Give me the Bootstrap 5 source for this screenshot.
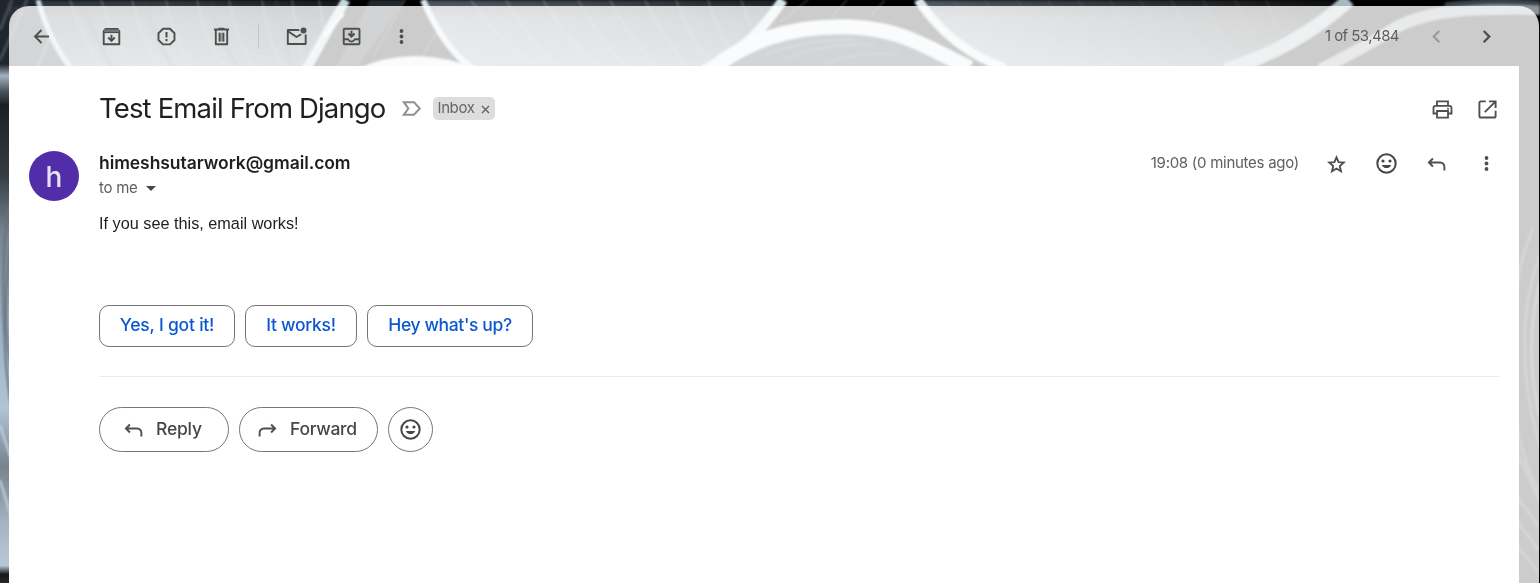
<!DOCTYPE html>
<html lang="en">
<head>
<meta charset="utf-8">
<meta name="viewport" content="width=device-width, initial-scale=1">
<title>Test Email From Django</title>
<link href="https://cdn.jsdelivr.net/npm/bootstrap@5.3.0/dist/css/bootstrap.min.css" rel="stylesheet">
<style>
body{font-family:Inter,Roboto,sans-serif;color:#1f1f1f;background:#000;height:583px;overflow:hidden}
.wallpaper{position:absolute;inset:0;z-index:-1}
.mail-window{margin:6px 1px 0 9px;height:577px;background:rgba(255,255,255,.8);border-radius:20px 20px 0 0}
.toolbar{height:60px;padding-left:20px;padding-right:40px}
.ic{width:25px;height:25px;flex:none;display:block;fill:none;stroke:#4d504f;stroke-width:1.9}
.ic .f{fill:#4d504f;stroke:none}
.tool-sep{width:1px;height:25px;background:#c6c6c8}
.pager{font-size:15px;color:#5e5e5e;line-height:20px;white-space:nowrap}
.pane{height:517px;margin-right:20px;padding:0 20px 0 90px}
.subject-row{height:85px}
.subject{font-size:27.5px;line-height:35px;font-weight:400;white-space:nowrap}
.chip-label{height:23px;border-radius:5px;background:#ddd;color:#666;font-size:15px;line-height:22px;padding:0 5px 1px;white-space:nowrap}
.avatar{width:50px;height:50px;margin-left:-70px;margin-right:20px;background:#512da8;color:#e8e1f5;font-size:28px;line-height:53px;font-weight:500}
.sender{font-size:17.5px;line-height:25px;font-weight:600;position:relative;top:-1px}
.muted-text{font-size:15px;line-height:20px;color:#5e5e5e;white-space:nowrap}
.message{font:16.25px/24px "Liberation Sans",Arial,sans-serif;color:#222}
.suggest{height:42px;border:1px solid #747775;border-radius:10px;color:#0b57d0;font-size:17.5px;font-weight:500;background:#fff;padding:0 0 2px;white-space:nowrap}
.act{height:45px;border:1px solid #747775;border-radius:23px;color:#444746;font-size:17.5px;font-weight:500;background:#fff;padding:0;white-space:nowrap}
.rule{height:1px;background:#e9ebee}
.t{display:inline-block;white-space:nowrap}
</style>
</head>
<body>
<svg class="wallpaper" width="1540" height="583" viewBox="0 0 1540 583" aria-hidden="true">
  <defs>
    <linearGradient id="fanA" x1="0" x2="1"><stop offset="0" stop-color="#4a5661"/><stop offset=".4" stop-color="#50555c"/><stop offset="1" stop-color="#22252a"/></linearGradient>
    <linearGradient id="fanB" x1="0" x2="1"><stop offset="0" stop-color="#75828f"/><stop offset=".45" stop-color="#606872"/><stop offset="1" stop-color="#303338"/></linearGradient>
    <linearGradient id="fanC" x1="0" x2="1"><stop offset="0" stop-color="#7b8995"/><stop offset=".35" stop-color="#565e66"/><stop offset=".7" stop-color="#33363a"/><stop offset="1" stop-color="#101215"/></linearGradient>
    <linearGradient id="topShade" x1="0" x2="0" y1="0" y2="1"><stop offset="0" stop-color="#000" stop-opacity=".45"/><stop offset=".2" stop-color="#000" stop-opacity=".05"/><stop offset=".25" stop-color="#dfe8f0" stop-opacity=".05"/><stop offset="1" stop-color="#dfe8f0" stop-opacity=".38"/></linearGradient>
    <linearGradient id="edge" x1="0" x2="0" y1="0" y2="1"><stop offset="0" stop-color="#20262c"/><stop offset=".11" stop-color="#20262c"/><stop offset=".13" stop-color="#a3b3c0"/><stop offset=".155" stop-color="#4d5861"/><stop offset=".18" stop-color="#1b2024"/><stop offset=".3" stop-color="#353d43"/><stop offset=".4" stop-color="#78848e"/><stop offset=".56" stop-color="#9db0c1"/><stop offset=".7" stop-color="#b0c4d7"/><stop offset=".8" stop-color="#78838d"/><stop offset=".9" stop-color="#a5b5c3"/><stop offset=".97" stop-color="#b8c8d6"/><stop offset=".985" stop-color="#15181b"/><stop offset="1" stop-color="#25292d"/></linearGradient>
    <filter id="soft" color-interpolation-filters="sRGB"><feGaussianBlur stdDeviation=".8"/></filter>
    <clipPath id="clipA"><path d="M37 0C43 26 55 48 75 70H302L347 0Z"/></clipPath>
    <clipPath id="clipB"><path d="M421 0C434 29 451 56 475 70H705C740 48 760 25 786 0Z"/></clipPath>
    <clipPath id="clipC"><path d="M914 0C940 36 974 58 1012 70H1210C1270 54 1315 30 1350 0Z"/></clipPath>
  </defs>
  <rect width="38" height="583" fill="url(#edge)"/>
  <rect x="9" y="6" width="66" height="64" fill="#2b3136"/>
  <g filter="url(#soft)" fill="none">
    <path d="M27 0 0 60M55 26 36 70M12 0 0 30" stroke="#56616b" stroke-width="3" opacity=".7"/>
    <path d="M12 195C0 235 1 350 12 410M14 220Q-2 320 14 380" stroke="#65727d" stroke-width="2"/>
    <path d="M0 425 12 462M0 480 12 520" stroke="#c5d4e0" stroke-width="2"/>
    <path d="M37 0C43 26 55 48 75 70H302L347 0Z" fill="url(#fanA)"/>
    <g clip-path="url(#clipA)">
      <rect x="35" width="315" height="70" fill="url(#topShade)"/>
      <path d="M70 0Q82 38 102 70M101 0Q116 42 133 70M132 0Q142 42 162 70M166 0Q174 42 194 70M197 0Q206 42 226 70M229 0Q237 42 256 70M262 0Q268 42 284 70M292 0Q296 30 304 70M319 0 324 30" stroke="#a6b0b8" stroke-width="1.2" opacity=".5"/>
      <path d="M82 0Q94 38 114 70M145 0Q155 42 175 70M211 0Q220 42 240 70M276 0 292 70" stroke="#383e44" stroke-width="4" opacity=".4"/>
    </g>
    <path d="M38 0C45 26 55 48 72 70" stroke="#c8d6de" stroke-width="5"/>
    <path d="M346 0 330 27 306 70" stroke="#c8d8e0" stroke-width="9"/>
    <path d="M344 14 324 36" stroke="#fff" stroke-width="2"/>
    <path d="M370 0 335 70H355L405 0Z" fill="#22272b"/>
    <path d="M405 0 373 57M438 30 420 61" stroke="#51585d" stroke-width="1.5" opacity=".7"/>
    <path d="M355 70Q412 42 480 70Z" fill="#dfe9ef"/>
    <path d="M421 0C434 29 451 56 475 70H705C740 48 760 25 786 0Z" fill="url(#fanB)"/>
    <g clip-path="url(#clipB)">
      <rect x="420" width="370" height="70" fill="url(#topShade)"/>
      <path d="M471 0Q500 45 546 70M506 0Q528 38 559 70M543 0Q570 43 601 70M578 0Q600 40 628 70M610 0Q631 40 659 70M645 0Q665 40 690 70M676 0Q690 35 708 63M708 0Q716 25 730 50M741 0 752 30" stroke="#c4ccd2" stroke-width="1.1" opacity=".42"/>
    </g>
    <path d="M423 0C436 29 451 55 475 70" stroke="#dbe6ec" stroke-width="6"/>
    <path d="M783 0C760 33 745 49 704 70" stroke="#d8e5eb" stroke-width="10"/>
    <path d="M714 70C760 21 850 15 902 32L970 70Z" fill="#24292e"/>
    <path d="M785 60Q823 42 875 45M824 65Q857 50 899 55M765 55Q810 38 855 40" stroke="#3c4349" stroke-width="3"/>
    <path d="M808 0 780 22M847 0 832 17M885 0 870 17" stroke="#555d64" stroke-width="1.5" opacity=".6"/>
    <path d="M711 70C750 38 796 25 850 27C903 29 926 47 970 68" stroke="#e0eaef" stroke-width="15"/>
    <path d="M914 0C940 36 974 58 1012 70H1210C1270 54 1315 30 1350 0Z" fill="url(#fanC)"/>
    <g clip-path="url(#clipC)">
      <rect x="910" width="440" height="70" fill="url(#topShade)"/>
      <path d="M953 0Q988 40 1046 70M984 0Q1020 42 1070 70M1016 0Q1050 42 1095 70M1047 0Q1080 42 1120 70M1078 0Q1110 42 1145 70M1109 0Q1137 42 1168 70M1140 0Q1165 42 1190 70M1171 0Q1191 40 1213 62M1203 0Q1218 32 1234 55M1235 0 1256 45M1266 0 1280 32" stroke="#9da6ad" stroke-width=".8" opacity=".35"/>
    </g>
    <path d="M918 0C939 31 967 55 1005 68" stroke="#dee9ee" stroke-width="9"/>
    <path d="M1349 0C1317 29 1274 55 1225 70" stroke="#a9b7bf" stroke-width="14"/>
    <path d="M1540 9C1468 8 1423 10 1390 31C1365 47 1344 57 1320 70" stroke="#8a949a" stroke-width="12"/>
    <path d="M1445 5Q1490-1 1540 3" stroke="#39434c" stroke-width="5"/>
    <g stroke="#52595d" stroke-width="3" opacity=".6">
      <path d="M1533 228Q1510 285 1516 330M1545 240Q1522 300 1525 350Q1525 405 1545 460"/>
      <path d="M1543 270Q1520 350 1543 430" stroke="#6e777e"/>
      <path d="M1515 415Q1524 470 1545 502M1515 447 1545 514M1512 490 1545 535M1512 515 1545 558M1512 540 1545 580"/>
    </g>
  </g>
  <rect x="1539" y="30" width="1" height="553" fill="#050505"/>
</svg>

<svg class="d-none">
  <symbol id="i-smile" viewBox="0 0 25 25"><circle cx="12.5" cy="12.5" r="9.2" fill="none" stroke="#444746" stroke-width="2"/><circle cx="9" cy="10" r="1.6" fill="#444746" stroke="none"/><circle cx="16" cy="10" r="1.6" fill="#444746" stroke="none"/><path d="M7.8 14H17.2A5.1 5.1 0 0 1 7.8 14Z" fill="#444746" stroke="none"/></symbol>
  <symbol id="i-reply" viewBox="0 0 25 25"><path d="M8.9 7.5 4.9 11.5 8.9 15.5M5 11.5H16.2A4.2 4.2 0 0 1 20.4 15.7V19.5"/></symbol>
  <symbol id="i-more" viewBox="0 0 25 25"><g fill="#4d504f" stroke="none"><circle cx="12.5" cy="7" r="1.9"/><circle cx="12.5" cy="12.5" r="1.9"/><circle cx="12.5" cy="18" r="1.9"/></g></symbol>
</svg>

<main class="mail-window">
  <header class="toolbar d-flex align-items-center">
    <svg class="ic" viewBox="0 0 25 25"><path d="M12.5 6 6 12.5 12.5 19M6.3 12.5H20"/></svg>
    <svg class="ic" style="margin-left:45px" viewBox="0 0 25 25"><path d="M4.7 7.2 6.3 5H18.7L20.3 7.2V20.3H4.7Z" stroke-linejoin="round"/><path d="M5 5.5H20V8.5H5Z" fill="#777" stroke="none"/><path d="M5 8.5H20" stroke-width="1.2"/><path d="M12.5 10.8V16M9.2 13.5 12.5 16.8 15.8 13.5"/></svg>
    <svg class="ic" style="margin-left:30px" viewBox="0 0 25 25"><path d="M9 4.8H16L20.5 9.2V16L16 20.4H9L4.5 16V9.2Z" stroke-linejoin="round"/><path d="M12.5 8V13.5M12.5 15V17.2" stroke-width="2"/></svg>
    <svg class="ic" style="margin-left:30px" viewBox="0 0 25 25"><path d="M5 5.5H20M9.5 4.7H15.5M6.8 6V20.3H18.2V6" stroke-linejoin="round"/><path d="M9.5 8.8H15.5V17.5H9.5Z" fill="#9a9a9a" stroke="none"/><path d="M10.6 8.8V17.5M14.4 8.8V17.5" stroke-width="1.6"/></svg>
    <div class="tool-sep" style="margin:0 25px 0 24px"></div>
    <svg class="ic" viewBox="0 0 25 25"><path d="M15.3 6H3.8V20H21.7V10.5M4 7.3 12.5 13 17.2 10.2" stroke-linejoin="round"/><circle class="f" cx="19.5" cy="6.5" r="3"/></svg>
    <svg class="ic" style="margin-left:30px" viewBox="0 0 25 25"><rect x="4.7" y="4.7" width="15.8" height="15.6" rx="1"/><path d="M5 15.3H9Q12.5 20 16 15.3H20M12.5 6.8V12M9.4 9.5 12.5 12.6 15.6 9.5"/></svg>
    <svg class="ic" style="margin-left:25px"><use href="#i-more"/></svg>
    <span class="pager ms-auto"><span class="t" style="letter-spacing:-.55px">1 of 53,484</span></span>
    <svg class="ic" style="margin-left:25px;opacity:.4" viewBox="0 0 25 25"><path d="M15.3 7 9.7 12.6 15.3 18.2" stroke-width="2.1"/></svg>
    <svg class="ic" style="margin-left:25px" viewBox="0 0 25 25"><path d="M9.7 7 15.3 12.6 9.7 18.2" stroke-width="2.3"/></svg>
  </header>

  <section class="pane bg-white">
    <div class="subject-row d-flex align-items-center">
      <h1 class="subject m-0"><span class="t" style="letter-spacing:-.85px">Test Email From Django</span></h1>
      <svg class="ic" style="margin-left:13px" viewBox="0 0 25 25"><path d="M4.8 6.2H15L20.8 12.5 15 18.8H4.8L9.3 12.5Z" stroke="#919191" stroke-width="2"/></svg>
      <span class="chip-label d-flex align-items-center" style="margin-left:9px"><span class="t" style="letter-spacing:-.4px">Inbox</span>
        <svg style="margin-left:7px;margin-top:2px" width="9" height="9" viewBox="0 0 9 9"><path d="M1 1 8 8M8 1 1 8" stroke="#5e5e5e" stroke-width="1.3"/></svg></span>
      <svg class="ic ms-auto" viewBox="0 0 25 25"><path d="M7 9.5V5.4H18V9.5M7 17.5H3.5V12Q3.5 9.8 5.7 9.8H19.3Q21.5 9.8 21.5 12V17.5H18M7 15H18V21.6H7Z" stroke-width="1.8"/><circle class="f" cx="18" cy="12.8" r="1"/></svg>
      <svg class="ic" style="margin-left:20px;margin-right:-1px" viewBox="0 0 25 25"><path d="M10.8 5.4H6Q4.4 5.4 4.4 7V19.9Q4.4 21.5 6 21.5H19Q20.6 21.5 20.6 19.9V14.8M14 5.4H20.6V12.1M20.4 5.6 9.8 16.2"/></svg>
    </div>

    <div class="d-flex align-items-start">
      <div class="avatar rounded-circle text-center">h</div>
      <div>
        <div class="sender"><span class="t" style="letter-spacing:-.07px">himeshsutarwork@gmail.com</span></div>
        <div class="muted-text d-flex align-items-center" style="margin-top:2px"><span class="t" style="letter-spacing:-.25px">to me</span>
          <svg style="margin-left:8px" width="10" height="5" viewBox="0 0 10 5"><path d="M0 0H10L5 5Z" fill="#444746"/></svg></div>
      </div>
      <div class="d-flex align-items-center ms-auto">
        <span class="muted-text" style="margin-top:-2px"><span class="t" style="letter-spacing:-.27px">19:08 (0 minutes ago)</span></span>
        <svg class="ic" style="margin-left:25px" viewBox="0 0 25 25"><path d="M12.5 6.3 14.6 11.2 19.7 11.6 15.8 15.1 17 20.2 12.5 17.5 8 20.2 9.2 15.1 5.3 11.6 10.4 11.2Z"/></svg>
        <svg class="ic" style="margin-left:25px"><use href="#i-smile"/></svg>
        <svg class="ic" style="margin-left:25px"><use href="#i-reply"/></svg>
        <svg class="ic" style="margin-left:25px"><use href="#i-more"/></svg>
      </div>
    </div>

    <div class="message" style="margin-top:10px"><span class="t">If you see this, email works!</span></div>

    <div class="d-flex" style="gap:10px;margin-top:70px">
      <button class="suggest" style="width:136px"><span class="t" style="letter-spacing:-.2px">Yes, I got it!</span></button>
      <button class="suggest" style="width:112px"><span class="t" style="letter-spacing:-.3px">It works!</span></button>
      <button class="suggest" style="width:166px"><span class="t" style="letter-spacing:-.37px">Hey what's up?</span></button>
    </div>
    <div class="rule" style="margin:29px 0 30px"></div>
    <div class="d-flex" style="gap:10px">
      <button class="act d-flex align-items-center" style="width:130px;padding-left:21px"><svg class="ic"><use href="#i-reply"/></svg><span class="t" style="margin-left:10px;letter-spacing:-.2px">Reply</span></button>
      <button class="act d-flex align-items-center" style="width:139px;padding-left:15px"><svg class="ic" style="transform:scaleX(-1)"><use href="#i-reply"/></svg><span class="t" style="margin-left:10px;letter-spacing:-.3px">Forward</span></button>
      <button class="act d-flex align-items-center justify-content-center" style="width:45px" aria-label="Add reaction"><svg class="ic"><use href="#i-smile"/></svg></button>
    </div>
  </section>
</main>
<script src="https://cdn.jsdelivr.net/npm/bootstrap@5.3.0/dist/js/bootstrap.bundle.min.js"></script>
</body>
</html>
